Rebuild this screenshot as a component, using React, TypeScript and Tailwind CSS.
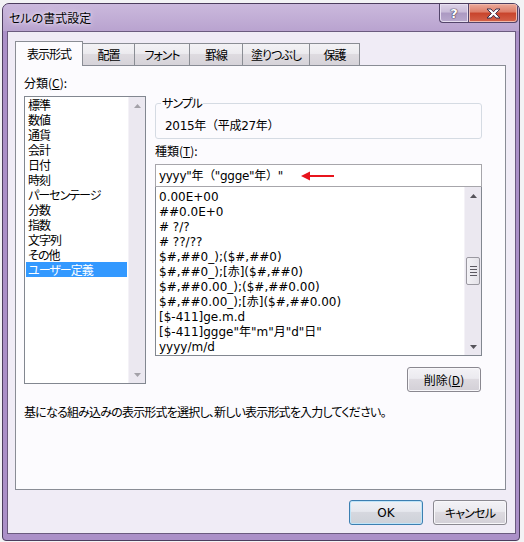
import React from 'react';

const categories = [
  '標準',
  '数値',
  '通貨',
  '会計',
  '日付',
  '時刻',
  'パーセンテージ',
  '分数',
  '指数',
  '文字列',
  'その他',
  'ユーザー定義',
];

const formats = [
  '0.00E+00',
  '##0.0E+0',
  '# ?/?',
  '# ??/??',
  '$#,##0_);($#,##0)',
  '$#,##0_);[赤]($#,##0)',
  '$#,##0.00_);($#,##0.00)',
  '$#,##0.00_);[赤]($#,##0.00)',
  '[$-411]ge.m.d',
  '[$-411]ggge"年"m"月"d"日"',
  'yyyy/m/d',
];

const tabs = [
  { label: '表示形式', w: 'w-[68px]', selected: true },
  { label: '配置', w: 'w-[52px]' },
  { label: 'フォント', w: 'w-[55px]' },
  { label: '罫線', w: 'w-[53px]' },
  { label: '塗りつぶし', w: 'w-[67px]' },
  { label: '保護', w: 'w-[50px]' },
];

const latin = "font-['DejaVu_Sans','Noto_Sans_CJK_JP',sans-serif]";

function Arrow({ up, color }: { up?: boolean; color: string }) {
  return (
    <svg width="7" height="4" viewBox="0 0 7 4">
      <polygon points={up ? '3.5,0 7,4 0,4' : '0,0 7,0 3.5,4'} fill={color} />
    </svg>
  );
}

function ScrollBar({ thumb, arrowColor }: { thumb?: boolean; arrowColor: string }) {
  return (
    <div className="w-[17px] h-full flex flex-col items-center bg-[#ebe8f0] border-l border-[#f4f2f7]">
      <div className="h-[17px] flex items-center justify-center">
        <Arrow up color={arrowColor} />
      </div>
      <div className="flex-1 w-full flex flex-col items-center">
        {thumb && (
          <div className="mt-[53px] w-[14px] h-[28px] rounded-[2px] border border-[#9a98a0] bg-[linear-gradient(90deg,#f3f2f6,#e4e2e8)] flex flex-col items-center justify-center gap-[2px]">
            <div className="w-[7px] h-px bg-[#5a5860]" />
            <div className="w-[7px] h-px bg-[#5a5860]" />
            <div className="w-[7px] h-px bg-[#5a5860]" />
            <div className="w-[7px] h-px bg-[#5a5860]" />
          </div>
        )}
      </div>
      <div className="h-[17px] flex items-center justify-center">
        <Arrow color={arrowColor} />
      </div>
    </div>
  );
}

function WinButton({ children, primary, className = '' }: { children: React.ReactNode; primary?: boolean; className?: string }) {
  return (
    <div
      className={`w-[74px] h-[25px] rounded-[3px] border flex items-center justify-center ${
        primary
          ? 'border-[#3c7fb1] bg-[linear-gradient(#eef1f6_0%,#e6e8ee_45%,#d6d8df_50%,#cdd1d8_100%)] shadow-[inset_0_0_0_1px_#bfe4f8]'
          : 'border-[#8a8890] bg-[linear-gradient(#f3f2f6_0%,#ebeaef_45%,#dddae0_50%,#d3d0d7_100%)] shadow-[inset_0_0_0_1px_#f8f7fa]'
      } ${className}`}
    >
      {children}
    </div>
  );
}

function TitleBar() {
  return (
    <div className="h-[27px] flex justify-between bg-[linear-gradient(#cbb9dd,#b9a3cf)]">
      <div className="pl-[6px] flex items-center text-[12px] [text-shadow:0_0_6px_#efe8f6,0_0_3px_#efe8f6]">
        セルの書式設定
      </div>
      <div className="flex items-start mr-[1px]">
        <div className="w-[29px] h-[19px] border border-r-0 border-t-0 border-[#53456a] rounded-bl-[4px] bg-[linear-gradient(#ddd3e8_0%,#c8bbd8_45%,#ab99c2_50%,#b9a9cd_100%)] flex items-center justify-center shadow-[inset_0_0_0_1px_#e6def0]">
          <span className="font-['DejaVu_Sans',sans-serif] font-bold text-[13px] leading-none text-white [text-shadow:0_0_1px_#3d3250,0_0_1px_#3d3250,0_0_1px_#3d3250]">
            ?
          </span>
        </div>
        <div className="w-[50px] h-[19px] border border-t-0 border-[#53456a] rounded-br-[4px] bg-[linear-gradient(#eba99a_0%,#dd7d68_45%,#c8432b_50%,#d4624a_100%)] flex items-center justify-center shadow-[inset_0_0_0_1px_#f0b9ac]">
          <svg width="15" height="11" viewBox="0 0 15 11">
            <polygon
              points="1,1 5,1 7.5,3.8 10,1 14,1 9.6,5.5 14,10 10,10 7.5,7.2 5,10 1,10 5.4,5.5"
              fill="#ffffff"
              stroke="#3b2e4c"
              strokeWidth="1"
              strokeLinejoin="round"
            />
          </svg>
        </div>
      </div>
    </div>
  );
}

export default function App() {
  return (
    <div className="w-[524px] h-[542px] bg-[#f3f3f5] overflow-hidden text-[12px] text-black font-['Noto_Sans_CJK_JP',sans-serif] [font-feature-settings:'palt']">
      <div className="ml-[2px] mt-[3px] w-[518px] h-[538px] flex flex-col border border-[#4c3d5d] rounded-t-[7px] rounded-b-[4px] bg-[#ab90c8] overflow-hidden">
        <TitleBar />
        <div className="ml-[4px] mr-[3px] h-[503px] border border-[#6b5b7f] bg-[#f0ecf6] flex flex-col pt-[9px] pl-[7px]">
          {/* Tabs */}
          <div className="flex items-end h-[24px] tracking-[-1px]">
            {tabs.map((t) =>
              t.selected ? (
                <div
                  key={t.label}
                  className={`${t.w} h-[25px] -mb-px relative border border-b-0 border-[#8a8d94] bg-[#fcfbfe] flex items-center justify-center pb-[1px]`}
                >
                  {t.label}
                </div>
              ) : (
                <div
                  key={t.label}
                  className={`${t.w} h-[22px] border-t border-r border-[#8a8d94] bg-[linear-gradient(#f3f2f5_0%,#ecebef_45%,#dedbe0_50%,#d6d3d9_100%)] flex items-center justify-center`}
                >
                  {t.label}
                </div>
              )
            )}
          </div>

          {/* Panel */}
          <div className="w-[491px] h-[425px] border border-[#898c95] bg-[#fcfbfe] pl-[8px] pt-[9px]">
            <div className="flex gap-[9px]">
              {/* Left column */}
              <div className="w-[122px] flex flex-col">
                <div className="h-[16px] leading-[16px]">
                  分類(<span className="underline">C</span>):
                </div>
                <div className="mt-[5px] h-[288px] border border-[#828790] bg-white flex">
                  <div className="flex-1 flex flex-col tracking-[-1px]">
                    {categories.map((c) =>
                      c === 'ユーザー定義' ? (
                        <div key={c} className="h-[15px] leading-[15px] mx-px pl-[2px] bg-[#3399ff] text-white">
                          {c}
                        </div>
                      ) : (
                        <div key={c} className="h-[15px] leading-[15px] pl-[3px]">
                          {c}
                        </div>
                      )
                    )}
                  </div>
                  <ScrollBar arrowColor="#a3a1a8" />
                </div>
              </div>

              {/* Right column */}
              <div className="w-[327px] flex flex-col">
                <div className="mt-[28px] h-[36px] border border-[#d5dbe3] rounded-[3px] relative pl-[9px] pt-[14px]">
                  <span className="absolute -top-[9px] left-[5px] px-px bg-[#fcfbfe] leading-[16px] tracking-[-1px]">サンプル</span>
                  <div className={`${latin} leading-[16px] [font-feature-settings:normal] tracking-[-0.3px]`}>
                    2015年（平成27年）
                  </div>
                </div>
                <div className="mt-[4px] h-[16px] leading-[16px]">
                  種類(<span className="underline">T</span>):
                </div>
                <div className="mt-[5px] h-[23px] border border-[#a7a6ab] bg-white pl-[3px] flex items-center relative">
                  <span className={`${latin} leading-[16px] [font-feature-settings:normal] tracking-[-0.3px]`}>
                    yyyy"年（"ggge"年）"
                  </span>
                  <svg className="absolute left-[145px] top-[6px]" width="34" height="10" viewBox="0 0 34 10">
                    <line x1="7" y1="5" x2="33" y2="5" stroke="#e8141c" strokeWidth="2.2" />
                    <polygon points="0,5 9,0.5 9,9.5" fill="#e8141c" />
                  </svg>
                </div>
                <div className="h-[169px] border border-t-0 border-[#828790] bg-white flex">
                  <div className={`${latin} flex-1 pt-[3px] pl-[3px] overflow-hidden`}>
                    {formats.map((f) => (
                      <div key={f} className="h-[15px] leading-[15px] whitespace-nowrap">
                        {f}
                      </div>
                    ))}
                  </div>
                  <ScrollBar thumb arrowColor="#55535a" />
                </div>
                <WinButton className="mt-[11px] self-end mr-[1px]">
                  削除(<span className="underline">D</span>)
                </WinButton>
              </div>
            </div>
            <div className="mt-[12px] leading-[16px] tracking-[-0.8px]">
              基になる組み込みの表示形式を選択し、新しい表示形式を入力してください。
            </div>
          </div>

          {/* Buttons */}
          <div className="mt-[10px] pr-[8px] flex justify-end gap-[10px]">
            <WinButton primary>
              <span className={latin}>OK</span>
            </WinButton>
            <WinButton>
              <span className="tracking-[-0.8px]">キャンセル</span>
            </WinButton>
          </div>
        </div>
      </div>
    </div>
  );
}
